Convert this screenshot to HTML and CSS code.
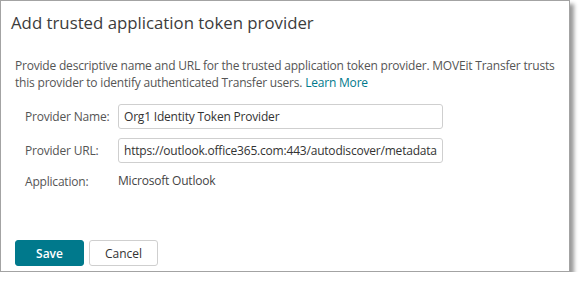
FILE: index.html
```html
<!DOCTYPE HTML>
<html>

<head>
	<meta http-equiv="Content-Type" content="text/html; charset=utf-8">
	<title>Add trusted application token provider</title>
	<link rel="stylesheet" href="styles.css">
</head>

<body>

	<div class="dialog">
		<h2 class="dialog-title">Add trusted application token provider</h2>
		<div class="dialog-body">
			<p class="intro">Provide descriptive name and URL for the trusted application token provider. MOVEit Transfer trusts
				this provider to identify authenticated Transfer users. <a href="#">Learn More</a></p>
			<div class="form">
				<label class="label">Provider Name:</label>
				<input class="field" type="text" value="Org1 Identity Token Provider">
				<label class="label">Provider URL:</label>
				<input class="field" type="text" value="https://outlook.office365.com:443/autodiscover/metadata/json/1">
				<span class="label">Application:</span>
				<span class="value">Microsoft Outlook</span>
			</div>
		</div>
		<div class="dialog-footer">
			<button class="btn btn-primary">Save</button>
			<button class="btn">Cancel</button>
		</div>
	</div>

</body>

</html>
```

FILE: styles.css
```css
body {
	margin: 0;
	font-family: "Open Sans", "Liberation Sans", sans-serif;
	background: #fff;
}

h2,
p {
	margin: 0;
	padding: 0;
}

.dialog {
	width: 568px;
	height: 270px;
	border: 1px solid #a3a3a3;
	box-shadow: 4px 4px 4px rgba(0, 0, 0, 0.4);
	display: flex;
	flex-direction: column;
	box-sizing: content-box;
}

.dialog-title {
	margin-top: 10px;
	padding-left: 10px;
	font-size: 16.8px;
	line-height: 24px;
	font-weight: normal;
	color: #3c3c3c;
}

.dialog-body {
	padding: 0 6px 0 14px;
	font-size: 12px;
	letter-spacing: -0.2px;
}

.intro {
	margin-top: 22px;
	line-height: 17px;
	color: #555;
}

.intro a {
	color: #00798c;
	text-decoration: none;
}

.form {
	margin-top: 13px;
	padding-left: 10px;
	display: grid;
	grid-template-columns: 93px 325px;
	row-gap: 9px;
	align-items: center;
	color: #555;
}

.field {
	height: 25px;
	box-sizing: border-box;
	border: 1px solid #cfcfcf;
	border-radius: 3px;
	padding: 0 5px;
	font-family: inherit;
	font-size: 12px;
	letter-spacing: -0.2px;
	color: #333;
	outline: none;
}

.value {
	line-height: 18px;
	color: #444;
}

.dialog-footer {
	margin-top: auto;
	padding: 0 0 5px 14px;
	display: flex;
	gap: 5px;
}

.btn {
	width: 69px;
	height: 26px;
	border: 1px solid #cfcfcf;
	border-radius: 3px;
	background: #fff;
	font-family: inherit;
	font-size: 12px;
	color: #333;
	padding: 0;
}

.btn-primary {
	background: #00798c;
	border-color: #00798c;
	color: #fff;
	font-weight: 600;
}
```
